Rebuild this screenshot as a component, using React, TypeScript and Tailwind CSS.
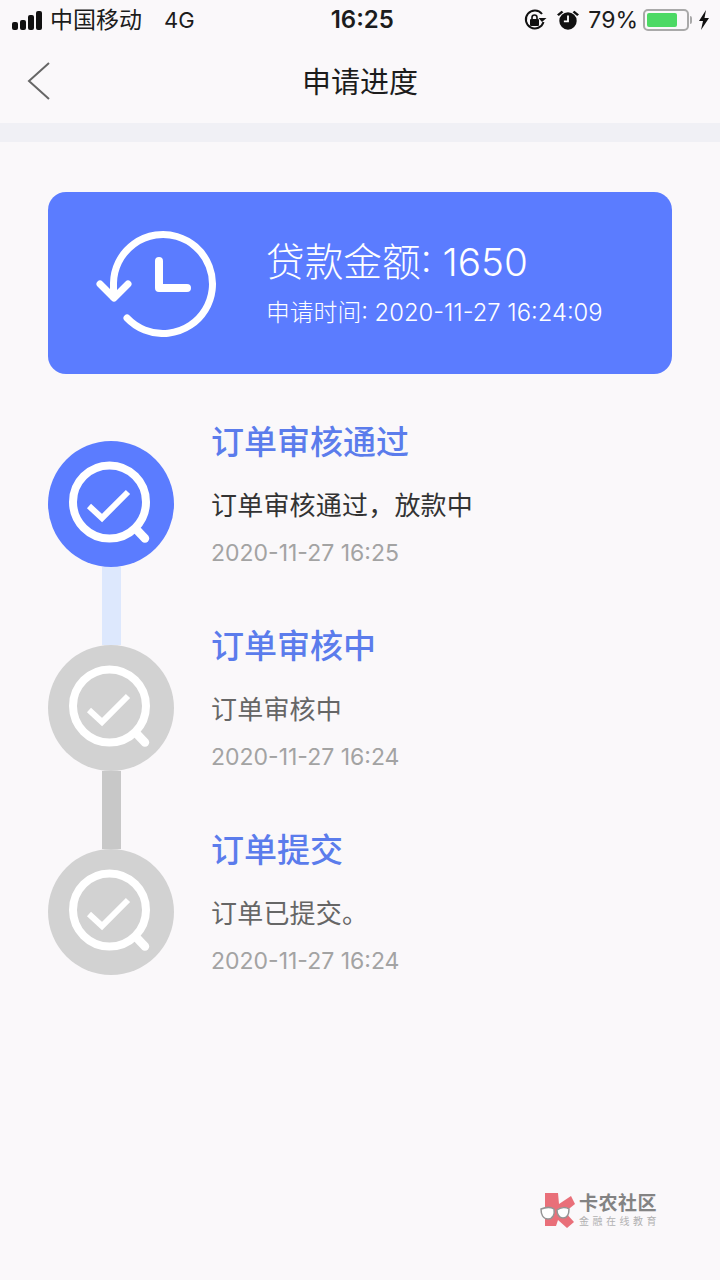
const font = "font-['Inter','Noto_Sans_CJK_SC',sans-serif]"

const steps = [
  { title: '订单审核通过', text: '订单审核通过，放款中', time: '2020-11-27 16:25', dark: true },
  { title: '订单审核中', text: '订单审核中', time: '2020-11-27 16:24', dark: false },
  { title: '订单提交', text: '订单已提交。', time: '2020-11-27 16:24', dark: false },
]

const SearchCheck = ({ active }: { active: boolean }) => (
  <div className={`flex h-[126px] w-[126px] items-center justify-center rounded-full ${active ? 'bg-[#5b7cff]' : 'bg-[#d2d2d2]'}`}>
    <svg width="126" height="126" viewBox="0 0 126 126" fill="none" stroke="#fff" strokeLinecap="round">
      <circle cx="61.500" cy="61" r="36.500" strokeWidth="8" />
      <path d="M88 88l9 9.500" strokeWidth="8.500" />
      <path d="M41 65l13 12 26-26" strokeWidth="6" strokeLinecap="butt" />
    </svg>
  </div>
)

const StatusBar = () => (
  <div className="flex h-10 items-center pl-3 pr-[10px] text-[#1c1c1c]">
    <div className="flex items-end gap-[2px]">
      <span className="h-[8px] w-[6px] rounded-[2px] bg-[#111]" />
      <span className="h-[10px] w-[6px] rounded-[2px] bg-[#111]" />
      <span className="h-[15px] w-[6px] rounded-[2px] bg-[#111]" />
      <span className="h-[19px] w-[6px] rounded-[2px] bg-[#111]" />
    </div>
    <span className="ml-[8px] text-[23px] leading-none">中国移动</span>
    <span className="ml-[22px] text-[22px] leading-none">4G</span>
    <span className="ml-[136px] text-[24px] font-semibold leading-none">16:25</span>
    <div className="ml-auto flex items-center">
      <svg width="24" height="24" viewBox="0 0 24 24" fill="none" stroke="#111" className="mr-[10px]">
        <path d="M20.500 14a9 9 0 1 1-1.500-8" strokeWidth="2" />
        <path d="M23.500 10l-4.500 4-3.500-4z" fill="#111" stroke="none" />
        <rect x="7" y="11" width="9" height="7" rx="1" fill="#111" stroke="none" />
        <path d="M9 11V9.500a2.500 2.500 0 0 1 5 0V11" strokeWidth="1.600" />
      </svg>
      <svg width="22" height="24" viewBox="0 0 24 24" className="mr-[9px]">
        <circle cx="12" cy="13" r="9.500" fill="#111" />
        <path d="M12 7v6.500H7.500" stroke="#fff" strokeWidth="2" fill="none" />
        <path d="M0 6l5-4 2 1.500-5 4zM24 6l-5-4-2 1.500 5 4z" fill="#111" />
      </svg>
      <span className="text-[23px] leading-none">79%</span>
      <div className="ml-[5px] flex h-[22px] w-[46px] items-center rounded-[5px] border-2 border-[#a9a9a9] p-[2px]">
        <div className="h-full w-[79%] rounded-[2px] bg-[#4cd964]" />
      </div>
      <span className="ml-[1px] h-[8px] w-[2px] rounded-r-full bg-[#a9a9a9]" />
      <svg width="12" height="20" viewBox="0 0 12 20" className="ml-[6px]">
        <path d="M8 0L1 11h4l-2 9 8-12H6.500z" fill="#111" />
      </svg>
    </div>
  </div>
)

const App = () => (
  <div className={`${font} relative flex h-[1280px] w-[720px] flex-col overflow-hidden bg-[#faf8fa]`}>
    <StatusBar />
    <div className="relative flex h-[83px] items-center justify-center pt-[2px]">
      <svg width="26" height="40" viewBox="0 0 26 40" fill="none" stroke="#666" strokeWidth="2" className="absolute left-[26px] top-[21px]">
        <path d="M23 2L3 20l20 18" />
      </svg>
      <h1 className="text-[29px] font-normal leading-none text-[#1c1c1c]">申请进度</h1>
    </div>
    <div className="h-[19px] bg-[#f0f0f5]" />

    <div className="mx-12 mt-[50px] flex h-[182px] items-center rounded-[18px] bg-[#5b7cff] pl-[48px] text-white">
      <svg width="120" height="108" viewBox="0 -1 120 108" fill="none" stroke="#fff" strokeLinecap="round" strokeLinejoin="round">
        <path d="M31 88A49.500 49.500 0 1 0 17.500 53v14" strokeWidth="7" />
        <path d="M4 54l14 14 14-14" strokeWidth="7" />
        <path d="M63 31v27h28" strokeWidth="8" />
      </svg>
      <div className="ml-[50px] flex flex-col pt-[2px]">
        <span className="text-[38.700px] font-light leading-none">贷款金额: 1650</span>
        <span className="mt-[19px] text-[23.800px] font-light leading-none">申请时间: 2020-11-27 16:24:09</span>
      </div>
    </div>

    <div className="ml-12 mt-[46px] flex">
      <div className="mt-[21px] flex w-[126px] flex-col items-center">
        <SearchCheck active />
        <div className="h-[78px] w-[19px] bg-[#dde8fd]" />
        <SearchCheck active={false} />
        <div className="h-[78px] w-[19px] bg-[#c8c8c8]" />
        <SearchCheck active={false} />
      </div>
      <div className="ml-[37px] flex flex-col">
        {steps.map((step) => (
          <div key={step.title} className="flex h-[204px] flex-col">
            <h2 className="text-[33px] font-medium leading-[44px] text-[#5b7cec]">{step.title}</h2>
            <p className={`mt-[24px] text-[26px] leading-[36px] tracking-[0.2px] ${step.dark ? 'text-[#333]' : 'text-[#666]'}`}>{step.text}</p>
            <small className="mt-[14px] text-[23px] leading-[30px] text-[#a3a3a3]">{step.time}</small>
          </div>
        ))}
      </div>
    </div>

    <div className="absolute left-[540px] top-[1192px] flex items-center opacity-90">
      <svg width="38" height="38" viewBox="0 0 38 38">
        <path d="M5 1h13l1 11L31 4l4 8-10 8 9 10-7 6-9-8-2 6H5z" fill="#e8616c" />
        <path d="M1 17c5-2 10-2 13 0 1 5-1 10-6 10S1 22 1 17zM17 18c4-3 9-3 12-1 0 5-2 9-6 9s-6-4-6-8z" fill="#fff" stroke="#8a8a8a" strokeWidth="1.500" />
      </svg>
      <div className="ml-[1px] flex flex-col gap-[3px]">
        <span className="h-[18px] text-[19px] font-bold leading-[18px] tracking-[0.5px] text-[#777]">卡农社区</span>
        <span className="h-[11px] text-[10px] leading-[11px] tracking-[3.500px] text-[#aaa]">金融在线教育</span>
      </div>
    </div>
  </div>
)

export default App
